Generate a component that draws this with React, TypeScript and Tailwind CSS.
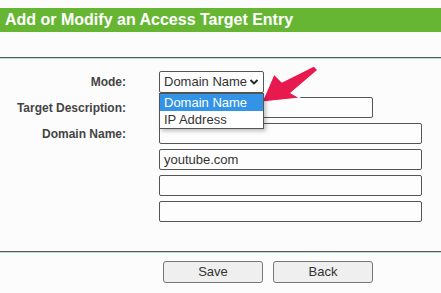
import React from "react";

export default function App() {
  const inputCls =
    "h-[21px] border border-[#555] rounded-[2px] bg-[#fdfdfd] px-[4px] text-[13px] leading-[19px] text-[#333]";
  return (
    <div className="w-[441px] h-[293px] bg-[#fcfcfc] overflow-hidden relative font-['Liberation_Sans',Arial,sans-serif]">
      <div className="h-[8px]" />
      <div className="h-[24px] bg-[#66b634] flex items-center pl-[5px] text-white font-bold text-[16px]">
        Add or Modify an Access Target Entry
      </div>
      <div className="h-[25px]" />
      <div className="h-[1px] bg-[#555a58]" />
      <div className="h-[1px] bg-[#b4e0d6]" />
      <div className="grid grid-cols-[126px_1fr] gap-x-[33px] pt-[12px] pr-[20px]">
        <div className="h-[22px] flex items-center justify-end text-[12px] font-bold text-[#444]">Mode:</div>
        <div className="h-[22px] relative">
          <div className="w-[105px] h-[22px] border border-[#555] rounded-[2px] bg-[#fdfdfd] flex items-center pl-[4px] text-[13px] text-[#333]">
            <span>Domain Name</span>
            <svg width="10" height="8" viewBox="0 0 10 8" className="ml-[2px]">
              <path d="M1.5 2 L5 5.5 L8.5 2" fill="none" stroke="#222" strokeWidth="1.8" />
            </svg>
          </div>
          <div className="absolute left-0 top-[22px] w-[105px] border border-[#555] bg-white shadow-[2px_2px_4px_rgba(0,0,0,0.25)] z-10 text-[13px]">
            <div className="h-[17px] bg-[#3393e6] text-white pl-[4px] leading-[17px]">Domain Name</div>
            <div className="h-[17px] text-[#333] pl-[4px] leading-[17px]">IP Address</div>
          </div>
        </div>
        <div className="h-[21px] mt-[4px] flex items-center justify-end text-[12px] font-bold text-[#444]">Target Description:</div>
        <div className={`${inputCls} mt-[4px] w-[214px]`} />
        <div className="h-[21px] mt-[5px] flex items-center justify-end text-[12px] font-bold text-[#444]">Domain Name:</div>
        <div className="mt-[5px] flex flex-col gap-[5px] w-[263px]">
          <div className={inputCls} />
          <div className={inputCls}>youtube.com</div>
          <div className={inputCls} />
          <div className={inputCls} />
        </div>
      </div>
      <div className="h-[29px]" />
      <div className="h-[1px] bg-[#555a58]" />
      <div className="h-[1px] bg-[#b4e0d6]" />
      <div className="flex gap-[10px] pl-[163px] pt-[8px]">
        <button className="w-[100px] h-[22px] border border-[#777] rounded-[3px] bg-[#efefef] text-[13px] text-[#333]">Save</button>
        <button className="w-[100px] h-[22px] border border-[#777] rounded-[3px] bg-[#efefef] text-[13px] text-[#333]">Back</button>
      </div>
      <svg className="absolute left-0 top-0 pointer-events-none" width="441" height="293" viewBox="0 0 441 293">
        <polygon
          points="262,102 274,74 282,82 314,66 318,70 291,93 300,98"
          fill="#e8194f"
          stroke="#fff"
          strokeWidth="1.2"
          strokeLinejoin="round"
        />
      </svg>
    </div>
  );
}
